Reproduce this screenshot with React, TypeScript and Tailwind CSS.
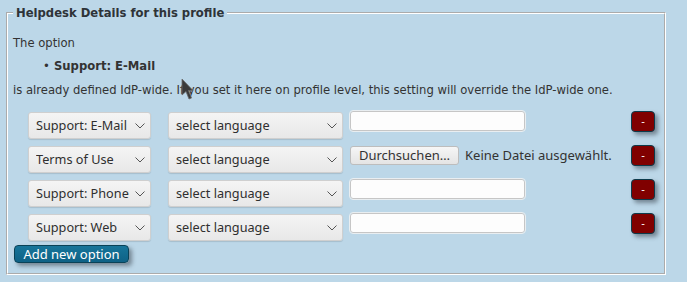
const rows = [
  { option: "Support: E-Mail", kind: "text" },
  { option: "Terms of Use", kind: "file" },
  { option: "Support: Phone", kind: "text" },
  { option: "Support: Web", kind: "text" },
];

function Dropdown({ value, width }: { value: string; width: string }) {
  return (
    <div className={`relative mt-[1px] h-[27px] ${width}`}>
      <select
        className="h-full w-full appearance-none rounded-[3px] border border-[#cfcfcf] bg-gradient-to-b from-[#f4f4f4] to-[#e8e8e8] pl-[7px] text-[12.7px] text-[#2f2f2f] shadow-[0_1px_1px_rgba(0,0,0,0.12)] outline-0"
        style={{ fontFamily: '"Noto Sans", sans-serif' }}
        defaultValue={value}
      >
        <option>{value}</option>
      </select>
      <svg
        className="pointer-events-none absolute right-[6px] top-[11px]"
        width="10"
        height="6"
        viewBox="0 0 10 6"
      >
        <polyline points="0.5,0.5 5,5 9.5,0.5" fill="none" stroke="#555" strokeWidth="1" />
      </svg>
    </div>
  );
}

export default function App() {
  return (
    <div
      className="min-h-[282px] bg-[#bcd7e8] pl-[6px] pt-[6px] text-[11.6px] text-[#333]"
      style={{ fontFamily: '"DejaVu Sans", sans-serif' }}
    >
      <fieldset className="w-[660px] border-2 border-white px-[5px] pb-[9px] [border-style:groove]">
        <legend className="px-[3px] text-[11.6px] font-bold leading-[14px] text-[#2e3338]">
          Helpdesk Details for this profile
        </legend>

        <p className="mt-[16px] leading-[14px]">The option</p>
        <ul className="ml-[30px] mt-[9px] leading-[14px]">
          <li className="flex">
            <span className="w-[11px]">•</span>
            <b>Support: E-Mail</b>
          </li>
        </ul>
        <p className="mt-[10px] leading-[14px]">
          is already defined IdP-wide. If you set it here on profile level, this
          setting will override the IdP-wide one.
        </p>

        <div className="ml-[15px] mt-[14px] flex flex-col gap-[7px]">
          {rows.map((row) => (
            <div key={row.option} className="flex h-[27px] items-start">
              <Dropdown value={row.option} width="w-[123px]" />
              <div className="ml-[17px]">
                <Dropdown value="select language" width="w-[175px]" />
              </div>
              <div
                className="ml-[7px] flex w-[281px] items-center"
                style={{ fontFamily: '"Noto Sans", sans-serif' }}
              >
                {row.kind === "text" ? (
                  <input
                    type="text"
                    className="h-[20px] w-[175px] rounded-[3px] border border-[#c6c6c6] bg-[#fdfdfd] outline outline-1 outline-[#e9eef1]"
                  />
                ) : (
                  <>
                    <button className="mt-[1px] h-[19px] w-[109px] rounded-[3px] border border-[#bdbdbd] bg-gradient-to-b from-[#f6f6f6] to-[#e4e4e4] text-[13px] leading-[17px] text-[#333]">
                      Durchsuchen…
                    </button>
                    <span className="ml-[6px] text-[13px] leading-[20px] text-[#333]">
                      Keine Datei ausgewählt.
                    </span>
                  </>
                )}
              </div>
              <button className="h-[21px] w-[24px] rounded-[4px] border border-[#0c3b4c] bg-[#800000] text-[10px] leading-[17px] text-white shadow-[3px_3px_4px_rgba(60,70,80,0.55)]">
                -
              </button>
            </div>
          ))}
        </div>

        <button
          className="ml-[1px] mt-[5px] h-[18px] w-[115px] rounded-[4px] border border-[#0a4257] bg-gradient-to-b from-[#17759a] to-[#0f6286] text-[13px] leading-[15px] text-white shadow-[3px_3px_4px_rgba(60,70,80,0.55)]"
          style={{ fontFamily: '"Noto Sans", sans-serif' }}
        >
          Add new option
        </button>
      </fieldset>

      <svg
        className="pointer-events-none absolute left-[181px] top-[78px]"
        width="13"
        height="23"
        viewBox="0 0 13 23"
      >
        <path
          d="M1 1 L1 17 L5 13.5 L8 21 L10.5 20 L7.5 12.5 L12 12.5 Z"
          fill="#3a3a3a"
          stroke="#6a6a6a"
          strokeWidth="0.8"
        />
      </svg>
    </div>
  );
}
